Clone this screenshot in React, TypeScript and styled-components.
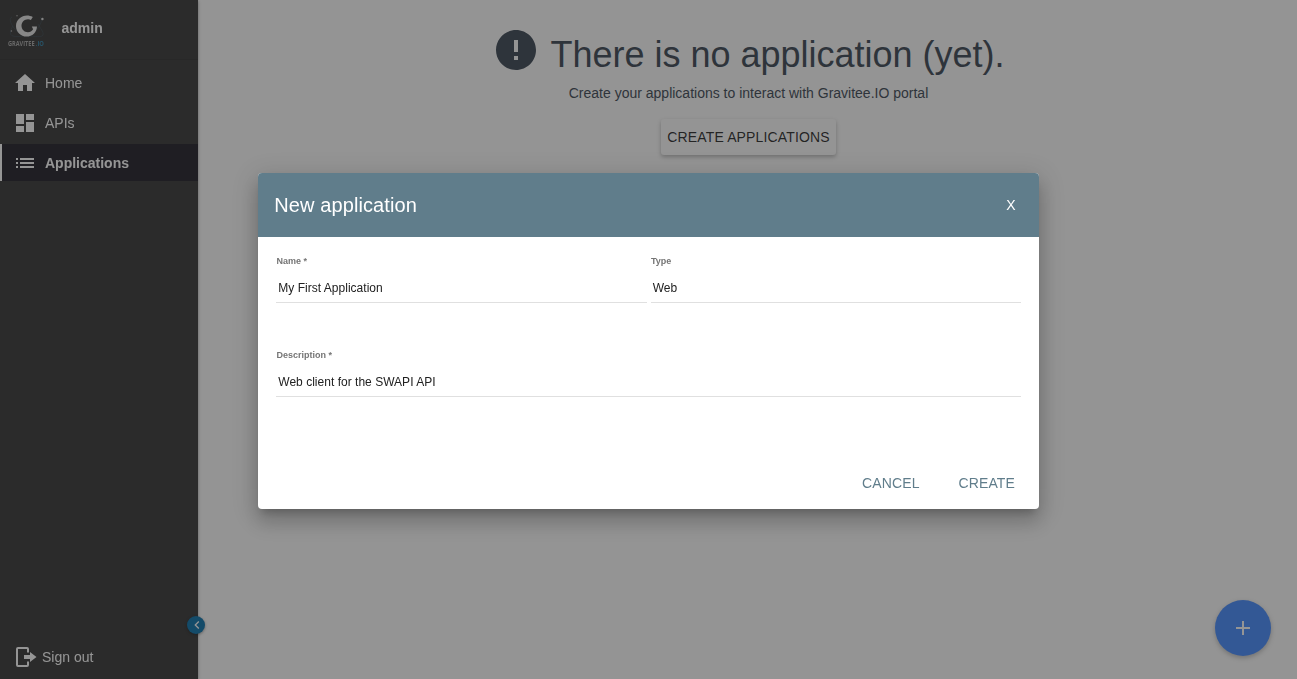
import React from 'react';
import styled, { createGlobalStyle } from 'styled-components';

const GlobalStyle = createGlobalStyle`
  * { box-sizing: border-box; }
  html, body { margin: 0; height: 100%; overflow: hidden; }
  body {
    background: #fdfdfd;
    color: rgba(0, 0, 0, 0.87);
    font-family: "Liberation Sans", Arial, sans-serif;
    font-size: 14px;
  }
  #root { height: 100%; }
`;

const Shell = styled.div`
  display: flex;
  height: 100vh;
`;

const Sidebar = styled.aside`
  position: relative;
  z-index: 1;
  display: flex;
  flex-direction: column;
  width: 198px;
  flex: none;
  background: #343434;
  color: #ffffff;
  box-shadow: 0 1px 3px rgba(0, 0, 0, 0.4);
  will-change: transform;
`;

const UserBar = styled.header`
  display: flex;
  align-items: center;
  height: 60px;
  padding: 0 0 4px 6px;
  border-bottom: 1px solid #2f2f2f;
`;

const Logo = styled.svg`
  width: 40px;
  height: 36px;
  margin-top: 8px;
`;

const UserName = styled.span`
  margin-left: 15.5px;
  font-weight: bold;
`;

const Nav = styled.nav`
  display: flex;
  flex-direction: column;
  gap: 3px;
  padding-top: 4px;
  flex: 1;
`;

const NavItem = styled.a<{ $active?: boolean }>`
  display: flex;
  align-items: center;
  gap: 8px;
  height: 37px;
  padding-left: ${p => (p.$active ? 11 : 13)}px;
  border-left: ${p => (p.$active ? '2px solid #ffffff' : 'none')};
  background: ${p => (p.$active ? '#1d1b25' : 'transparent')};
  font-weight: ${p => (p.$active ? 'bold' : 'normal')};
`;

const Icon = styled.svg<{ $size?: number }>`
  width: ${p => p.$size ?? 24}px;
  height: ${p => p.$size ?? 24}px;
  flex: none;
  fill: currentColor;
`;

const SignOut = styled.a`
  display: flex;
  align-items: center;
  gap: 4px;
  height: 44px;
  padding-left: 14px;
`;

const Collapse = styled.button`
  position: absolute;
  right: -7px;
  bottom: 45px;
  display: flex;
  align-items: center;
  justify-content: center;
  width: 18px;
  height: 18px;
  padding: 0 0 0 2px;
  border: 0;
  border-radius: 50%;
  background: #0871ab;
  color: #ffffff;
  box-shadow: 0 1px 3px rgba(0, 0, 0, 0.4);
`;

const Main = styled.main`
  display: flex;
  flex: 1;
  flex-direction: column;
  align-items: center;
  padding: 26px 0 0 2px;
  color: #3b4653;
`;

const EmptyTitle = styled.div`
  display: flex;
  align-items: flex-start;
  gap: 10.5px;
  height: 56px;
`;

const Heading = styled.h1`
  margin: 8px 0.5px 0 0;
  font-size: 36px;
  font-weight: normal;
  line-height: 42px;
  white-space: nowrap;
`;

const Hint = styled.p`
  margin: 3px 0 0;
  line-height: 16px;
`;

const RaisedButton = styled.button`
  height: 36px;
  margin-top: 18px;
  padding: 0 6px;
  border: 0;
  border-radius: 3px;
  background: #fdfdfd;
  color: rgba(0, 0, 0, 0.87);
  font: inherit;
  letter-spacing: 0.14px;
  white-space: nowrap;
  box-shadow: 0 2px 4px 0 rgba(0, 0, 0, 0.28);
`;

const Fab = styled.button`
  position: fixed;
  right: 26px;
  bottom: 23px;
  display: flex;
  align-items: center;
  justify-content: center;
  width: 56px;
  height: 56px;
  padding: 0;
  border: 0;
  border-radius: 50%;
  background: #448aff;
  color: #ffffff;
  box-shadow: 0 2px 5px 0 rgba(0, 0, 0, 0.26);
`;

const Backdrop = styled.div`
  position: fixed;
  inset: 0;
  z-index: 10;
  display: flex;
  justify-content: center;
  align-items: flex-start;
  padding-top: 173px;
  background: rgba(33, 33, 33, 0.48);
`;

const Dialog = styled.form`
  display: flex;
  flex-direction: column;
  width: 781px;
  height: 336px;
  overflow: hidden;
  border-radius: 4px;
  background: #ffffff;
  box-shadow: 0 7px 8px -4px rgba(0, 0, 0, 0.2), 0 13px 19px 2px rgba(0, 0, 0, 0.14),
    0 5px 24px 4px rgba(0, 0, 0, 0.12);
  will-change: transform;
`;

const DialogHeader = styled.header`
  display: flex;
  align-items: center;
  justify-content: space-between;
  height: 64px;
  padding: 0 23.4px 0 16.3px;
  background: #607d8b;
  color: #ffffff;
`;

const DialogTitle = styled.h2`
  margin: 0;
  font-size: 20px;
  font-weight: normal;
  letter-spacing: 0.1px;
`;

const Fields = styled.div`
  display: grid;
  grid-template-columns: 371px 370px;
  column-gap: 4px;
  row-gap: 42px;
  padding: 14px 18px 0;
  flex: 1;
  align-content: start;
`;

const Field = styled.label<{ $wide?: boolean; $shift?: number }>`
  display: flex;
  flex-direction: column;
  height: 52px;
  grid-column: ${p => (p.$wide ? '1 / -1' : 'auto')};
  border-bottom: 1px solid #e0e0e0;
  text-indent: ${p => p.$shift ?? 0}px;
`;

const FieldLabel = styled.span`
  padding-left: 0.5px;
  color: #757575;
  font-size: 9px;
  font-weight: bold;
  line-height: 20px;
`;

const FieldValue = styled.span`
  padding: 8px 2.3px 0;
  color: #212121;
  font-size: 12px;
  letter-spacing: 0.02px;
  line-height: 18px;
`;

const Actions = styled.footer`
  display: flex;
  justify-content: flex-end;
  gap: 38.8px;
  height: 52px;
  padding: 0 24px;
  align-items: center;
`;

const FlatButton = styled.button<{ $light?: boolean }>`
  padding: 0;
  border: 0;
  background: none;
  color: ${p => (p.$light ? '#ffffff' : '#607d8b')};
  font: inherit;
  letter-spacing: 0.14px;
`;

const navItems = [
  { label: 'Home', path: 'M10 20v-6h4v6h5v-8h3L12 3 2 12h3v8z' },
  { label: 'APIs', path: 'M3 13h8V3H3v10zm0 8h8v-6H3v6zm10 0h8V11h-8v10zm0-18v6h8V3h-8z' },
  {
    label: 'Applications',
    active: true,
    path: 'M3 13h2v-2H3v2zm0 4h2v-2H3v2zm0-8h2V7H3v2zm4 4h14v-2H7v2zm0 4h14v-2H7v2zM7 7v2h14V7H7z',
  },
];

export default function App() {
  return (
    <>
      <GlobalStyle />
      <Shell>
        <Sidebar>
          <UserBar>
            <Logo viewBox="0 0 40 36">
              <g fill="none" stroke="#3c4d57" strokeWidth=".6">
                <path d="M6 3C3 4 4 9 8 14S16 22 23 22c6 0 12 2 14-1 1-3-3-7-5-11" />
                <path d="M34 3c3 2 1 8-4 13S12 24 7 22C3 21 4 16 7 12" />
              </g>
              <path
                d="M26.8 3C19.5-1.2 10 3.6 10 12c0 6 4.800 10.600 10.600 10.600 5.800 0 10.200-4.400 10.400-10.100h-5.200l1.300 2.800c-1.200 2-3 3-5.100 3-3.700 0-6.500-2.900-6.500-6.500 0-3.700 3-6.500 6.500-6.500 1 0 2 .2 2.900.7z"
                fill="#e4e4e4"
              />
              <circle cx="36.4" cy="5" r="1.2" fill="#ddd" />
              <circle cx="5.4" cy="17" r=".8" fill="#aaa" />
              <circle cx="11" cy="1.8" r=".8" fill="#999" />
              <text x="2" y="31.6" fontSize="7" fontFamily="Open Sans, sans-serif" fontWeight="700" fill="#a8a8a8" textLength="26.6" lengthAdjust="spacingAndGlyphs">GRAVITEE</text>
              <text x="29.8" y="31.6" fontSize="7" fontFamily="Open Sans, sans-serif" fontWeight="700" fill="#2d7fa6" textLength="8.2" lengthAdjust="spacingAndGlyphs">.IO</text>
            </Logo>
            <UserName>admin</UserName>
          </UserBar>
          <Nav>
            {navItems.map(item => (
              <NavItem key={item.label} $active={item.active}>
                <Icon viewBox="0 0 24 24"><path d={item.path} /></Icon>
                {item.label}
              </NavItem>
            ))}
          </Nav>
          <SignOut>
            <Icon viewBox="0 0 24 24">
              <path d="M14 7.5V4a1 1 0 0 0-1-1H4a1 1 0 0 0-1 1v16a1 1 0 0 0 1 1h9a1 1 0 0 0 1-1v-3.5" fill="none" stroke="currentColor" strokeWidth="2" />
              <path d="M10 10h6V7l6.5 5-6.5 5v-3h-6z" />
            </Icon>
            Sign out
          </SignOut>
          <Collapse type="button">
            <Icon $size={16} viewBox="0 0 24 24"><path d="M15.41 7.41L14 6l-6 6 6 6 1.41-1.41L10.83 12z" /></Icon>
          </Collapse>
        </Sidebar>
        <Main>
          <EmptyTitle>
            <Icon $size={48} viewBox="0 0 24 24">
              <path d="M12 2C6.48 2 2 6.48 2 12s4.48 10 10 10 10-4.48 10-10S17.52 2 12 2zm1 15h-2v-2h2v2zm0-4h-2V7h2v6z" />
            </Icon>
            <Heading>There is no application (yet).</Heading>
          </EmptyTitle>
          <Hint>Create your applications to interact with Gravitee.IO portal</Hint>
          <RaisedButton type="button">CREATE APPLICATIONS</RaisedButton>
        </Main>
      </Shell>
      <Fab type="button">
        <Icon viewBox="0 0 24 24"><path d="M19 13h-6v6h-2v-6H5v-2h6V5h2v6h6v2z" /></Icon>
      </Fab>
      <Backdrop>
        <Dialog>
          <DialogHeader>
            <DialogTitle>New application</DialogTitle>
            <FlatButton type="button" $light>X</FlatButton>
          </DialogHeader>
          <Fields>
            <Field>
              <FieldLabel>Name *</FieldLabel>
              <FieldValue>My First Application</FieldValue>
            </Field>
            <Field $shift={-0.6}>
              <FieldLabel>Type</FieldLabel>
              <FieldValue>Web</FieldValue>
            </Field>
            <Field $wide>
              <FieldLabel>Description *</FieldLabel>
              <FieldValue>Web client for the SWAPI API</FieldValue>
            </Field>
          </Fields>
          <Actions>
            <FlatButton type="button">CANCEL</FlatButton>
            <FlatButton type="button">CREATE</FlatButton>
          </Actions>
        </Dialog>
      </Backdrop>
    </>
  );
}
